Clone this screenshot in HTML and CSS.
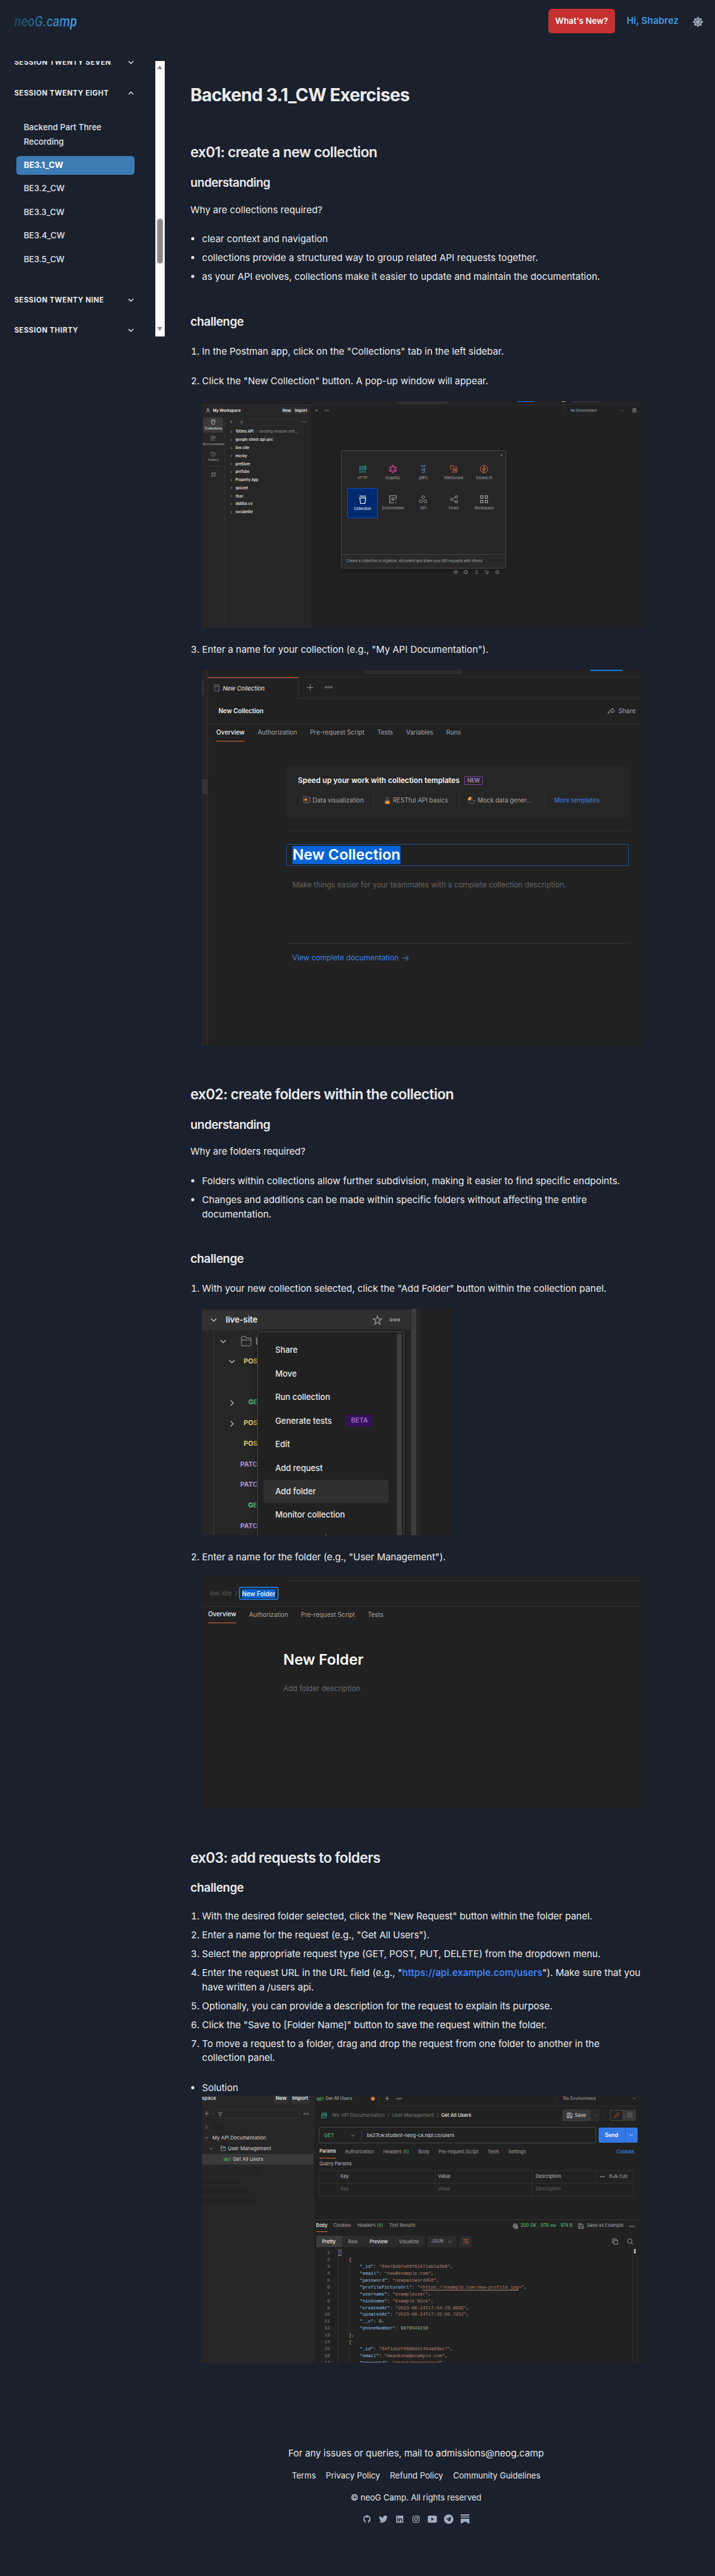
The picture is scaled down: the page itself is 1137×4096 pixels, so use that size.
FILE: index.html
```html
<!DOCTYPE html>
<html lang="en">
<head>
<meta charset="utf-8">
<title>Backend 3.1_CW Exercises | neoG.camp</title>
<link rel="stylesheet" href="styles.css">
</head>
<body>
<svg class="sprite" aria-hidden="true">
  <symbol id="down" viewBox="0 0 14 14"><path d="M2 4.5 7 9.5 12 4.5"/></symbol>
  <symbol id="up" viewBox="0 0 14 14"><path d="M2 9.5 7 4.5 12 9.5"/></symbol>
  <symbol id="right" viewBox="0 0 14 14"><path d="M4.5 2 9.5 7 4.5 12"/></symbol>
  <symbol id="plus" viewBox="0 0 14 14"><path d="M7 0V14M0 7H14"/></symbol>
  <symbol id="more" viewBox="0 0 20 8"><circle cx="3.5" cy="4" r="2"/><circle cx="10" cy="4" r="2"/><circle cx="16.500" cy="4" r="2"/></symbol>
  <symbol id="filter" viewBox="0 0 14 14"><path d="M1 2H13M3 6H11M4.500 9.500H9.500M6 13H8"/></symbol>
  <symbol id="bin" viewBox="0 0 16 16"><path d="M2 1H14M1.500 4.500H14.500M2.500 4.500 4 14.500H12L13.500 4.500"/></symbol>
  <symbol id="env" viewBox="0 0 16 16"><path d="M14 9V1.500H2V14.500H10M6 5.500H10V9.500H6ZM13.500 12.500V14.500"/></symbol>
  <symbol id="clock" viewBox="0 0 16 16"><path d="M2 5A6.500 6.500 0 1 1 1.500 9M1.500 2V5.500H5M8 4.500V8.500L10.500 10"/></symbol>
  <symbol id="grid" viewBox="0 0 16 16"><path d="M1.500 1.500H6V6H1.500ZM10 1.500H14.500V6H10ZM1.500 10H6V14.500H1.500ZM10 10H14.500V14.500H10Z"/></symbol>
  <symbol id="gridplus" viewBox="0 0 16 16"><path d="M1.500 1.500H6V6H1.500ZM10 1.500H14.500V6H10ZM1.500 10H6V14.500H1.500ZM12.200 9.500V15M9.500 12.200H15"/></symbol>
  <symbol id="http" viewBox="0 0 20 20"><path d="M2 3.500H18L15.500 1M18 16.500H2L4.500 19M2.500 6.500V13.500M5.500 6.500V13.500M2.500 10H5.500M7 6.500H11M9 6.500V13.500M11.500 6.500H14M12.700 6.500V13.500M15.500 13.500V6.500H18V10H15.500"/></symbol>
  <symbol id="graphql" viewBox="0 0 20 20"><path d="M10 2 17 6V14L10 18 3 14V6ZM10 2 3.500 14H16.500Z"/><circle cx="10" cy="2.200" r="1.200"/><circle cx="17" cy="6" r="1.200"/><circle cx="17" cy="14" r="1.200"/><circle cx="10" cy="17.800" r="1.200"/><circle cx="3" cy="14" r="1.200"/><circle cx="3" cy="6" r="1.200"/></symbol>
  <symbol id="grpc" viewBox="0 0 20 20"><path d="M5 3H15M7 1 5 3 7 5M13 1 15 3 13 5M13 8V16Q13 19 10 19 7.500 19 7 17.500"/><circle cx="10" cy="11" r="3"/></symbol>
  <symbol id="socket" viewBox="0 0 20 20"><path d="M2 2V8L8 13 12 13 12 8 7 2ZM7 7 11 11M5 17H12L17 17V6L12 2M14 15V9"/></symbol>
  <symbol id="bolt" viewBox="0 0 20 20"><circle cx="10" cy="10" r="8.500"/><path d="M11.500 4 6 11H9.500L8.500 16 14 9H10.500Z"/></symbol>
  <symbol id="api" viewBox="0 0 20 20"><path d="M10 1.500 13 3.200V6.800L10 8.500 7 6.800V3.200Z"/><circle cx="5" cy="14.500" r="3.500"/><circle cx="15" cy="14.500" r="3.500"/></symbol>
  <symbol id="flows" viewBox="0 0 20 20"><circle cx="4" cy="10" r="2.700"/><path d="M13.500 2H18V6.500H13.500ZM13.500 13.500H18V18H13.500ZM6.500 9 13.500 4.500M6.500 11 13.500 16"/></symbol>
  <symbol id="person" viewBox="0 0 16 16"><circle cx="8" cy="4.500" r="3"/><path d="M2.500 15V12L6 9H10L13.500 12V15"/></symbol>
  <symbol id="eye" viewBox="0 0 16 16"><path d="M8 14.500H2.500V1.500H13.500V8M5 5H11M5 8H9M8 2V14"/><circle cx="12" cy="12" r="2.500"/></symbol>
  <symbol id="share" viewBox="0 0 18 18"><path d="M1.500 16C2 10 6 7 11 7V3L17 9 11 14V11C7 11 4 12 1.500 16Z"/></symbol>
  <symbol id="star" viewBox="0 0 24 24"><path d="M12 2 14.700 9H22L16 13.500 18.300 21.500 12 16.800 5.700 21.500 8 13.500 2 9H9.300Z"/></symbol>
  <symbol id="folder" viewBox="0 0 24 24"><path d="M1.500 20V4Q1.500 1.500 4 1.500H9L12 5H20Q22.500 5 22.500 7.500V20Q22.500 22.500 20 22.500H4Q1.500 22.500 1.500 20ZM1.500 9.500H22.500"/></symbol>
  <symbol id="disk" viewBox="0 0 16 16"><path d="M1.500 1.500H11L14.500 5V14.500H1.500ZM4.500 14V9H11.500V14M5 2V5H9.500V2"/></symbol>
  <symbol id="pencil" viewBox="0 0 16 16"><path d="M2 14 3 10 11.500 1.500 14.500 4.500 6 13Z"/></symbol>
  <symbol id="note" viewBox="0 0 16 16"><path d="M2 1.500H14V12H9L6 14.500V12H2ZM4.500 5H11.500M4.500 8H11.500"/></symbol>
  <symbol id="globe" viewBox="0 0 16 16"><circle cx="7.500" cy="7.500" r="6"/><path d="M1.500 7.500H13.500M7.500 1.500Q3 7.500 7.500 13.500M7.500 1.500Q12 7.500 7.500 13.500M10 10H15V15H10Z"/></symbol>
  <symbol id="wrap" viewBox="0 0 16 16"><path d="M1 3H15M1 8H12Q15 8 15 10.500 15 13 12 13H9M11 11 9 13 11 15M1 13H5"/></symbol>
  <symbol id="copy" viewBox="0 0 16 16"><path d="M5 5H14.500V14.500H5ZM11 5V1.500H1.500V11H5"/></symbol>
  <symbol id="search" viewBox="0 0 16 16"><circle cx="7" cy="7" r="5.500"/><path d="M11 11 15 15"/></symbol>
</svg>

<header class="topbar">
  <a class="logo">neoG.camp</a>
  <a class="whats-new">What's New?</a>
  <a class="hello">Hi, Shabrez</a>
  <svg class="sun" viewBox="0 0 26 26"><path d="M13 .5 16.250 5.150 21.800 4.200 20.850 9.750 25.500 13 20.850 16.250 21.800 21.800 16.250 20.850 13 25.500 9.750 20.850 4.200 21.800 5.150 16.250 .5 13 5.150 9.750 4.200 4.200 9.750 5.150Z"/><circle class="sun-ring" cx="13" cy="13" r="5.600"/></svg>
</header>

<div class="columns">
  <nav class="sidebar">
    <div class="sessions">
      <div class="session">Session Twenty Seven<svg class="ic"><use href="#down"/></svg></div>
      <div class="session">Session Twenty Eight<svg class="ic"><use href="#up"/></svg></div>
      <ul class="lessons">
        <li>Backend Part Three Recording</li>
        <li class="current">BE3.1_CW</li>
        <li>BE3.2_CW</li>
        <li>BE3.3_CW</li>
        <li>BE3.4_CW</li>
        <li>BE3.5_CW</li>
      </ul>
      <div class="session">Session Twenty Nine<svg class="ic"><use href="#down"/></svg></div>
      <div class="session last">Session Thirty<svg class="ic"><use href="#down"/></svg></div>
    </div>
    <div class="scrollbar"><i class="tri-up"></i><i class="thumb"></i><i class="tri-down"></i></div>
  </nav>

  <main class="content">
    <h1>Backend 3.1_CW Exercises</h1>

    <h2 class="first">ex01: create a new collection</h2>
    <h3>understanding</h3>
    <p>Why are collections required?</p>
    <ul class="list">
      <li>clear context and navigation</li>
      <li>collections provide a structured way to group related API requests together.</li>
      <li>as your API evolves, collections make it easier to update and maintain the documentation.</li>
    </ul>
    <h3 class="later">challenge</h3>
    <ol class="list loose">
      <li>In the Postman app, click on the "Collections" tab in the left sidebar.</li>
      <li>Click the "New Collection" button. A pop-up window will appear.
        <div class="shot shot-a">
          <div class="a-strip"><i class="a-search"></i><i class="a-blue"></i><i class="a-face"></i><i class="a-up"></i></div>
          <div class="a-bar">
            <div class="a-ws"><svg class="ic"><use href="#person"/></svg><b>My Workspace</b><span class="btn">New</span><span class="btn">Import</span></div>
            <svg class="ic a-plus"><use href="#plus"/></svg><svg class="ic a-dots"><use href="#more"/></svg>
            <div class="a-noenv"><span>No Environment</span><svg class="ic"><use href="#down"/></svg><svg class="ic a-eye"><use href="#eye"/></svg></div>
          </div>
          <div class="a-body">
            <div class="a-nav">
              <div class="a-tab on"><svg class="ic"><use href="#bin"/></svg>Collections</div>
              <div class="a-tab"><svg class="ic"><use href="#env"/></svg>Environments</div>
              <div class="a-tab"><svg class="ic"><use href="#clock"/></svg>History</div>
              <hr>
              <svg class="ic a-more"><use href="#gridplus"/></svg>
            </div>
            <div class="a-list">
              <div class="a-filter"><svg class="ic a-p"><use href="#plus"/></svg><span class="a-box"><svg class="ic"><use href="#filter"/></svg></span><svg class="ic a-d"><use href="#more"/></svg></div>
              <div class="a-item"><svg class="ic"><use href="#right"/></svg>100ms API<span class="fork">⑂</span><span class="dim">docking-module-met...</span></div>
              <div class="a-item"><svg class="ic"><use href="#right"/></svg>google-sheet-api-poc</div>
              <div class="a-item"><svg class="ic"><use href="#right"/></svg>live-site</div>
              <div class="a-item"><svg class="ic"><use href="#right"/></svg>mocky</div>
              <div class="a-item"><svg class="ic"><use href="#right"/></svg>preStore</div>
              <div class="a-item"><svg class="ic"><use href="#right"/></svg>preTube</div>
              <div class="a-item"><svg class="ic"><use href="#right"/></svg>Property App</div>
              <div class="a-item"><svg class="ic"><use href="#right"/></svg>quizzel</div>
              <div class="a-item"><svg class="ic"><use href="#right"/></svg>rbac</div>
              <div class="a-item"><svg class="ic"><use href="#right"/></svg>skillful-cv</div>
              <div class="a-item"><svg class="ic"><use href="#right"/></svg>socialelite</div>
            </div>
            <div class="a-stage">
              <div class="modal">
                <div class="modal-x">×</div>
                <div class="tiles">
                  <div class="tile teal"><svg class="ic"><use href="#http"/></svg>HTTP</div>
                  <div class="tile pink"><svg class="ic"><use href="#graphql"/></svg>GraphQL</div>
                  <div class="tile blue"><svg class="ic"><use href="#grpc"/></svg>gRPC</div>
                  <div class="tile orange"><svg class="ic"><use href="#socket"/></svg>WebSocket</div>
                  <div class="tile orange"><svg class="ic"><use href="#bolt"/></svg>Socket.IO</div>
                  <div class="tile picked"><svg class="ic"><use href="#bin"/></svg>Collection<svg class="ic pin"><use href="#pencil"/></svg></div>
                  <div class="tile"><svg class="ic"><use href="#env"/></svg>Environment</div>
                  <div class="tile"><svg class="ic"><use href="#api"/></svg>API</div>
                  <div class="tile"><svg class="ic"><use href="#flows"/></svg>Flows</div>
                  <div class="tile"><svg class="ic"><use href="#grid"/></svg>Workspace</div>
                </div>
                <div class="modal-foot">Create a collection to organize, document and share your API requests with others.</div>
              </div>
              <div class="a-mini"><svg class="ic"><use href="#http"/></svg><svg class="ic"><use href="#graphql"/></svg><svg class="ic"><use href="#grpc"/></svg><svg class="ic"><use href="#socket"/></svg><svg class="ic"><use href="#bolt"/></svg></div>
            </div>
          </div>
        </div>
      </li>
      <li>Enter a name for your collection (e.g., "My API Documentation").
        <div class="shot shot-b">
          <div class="b-edge"><i></i><i></i></div>
          <div class="b-main">
            <div class="b-strip"><i class="b-search"></i><i class="b-blue"></i></div>
            <div class="b-tabs"><div class="b-tab"><svg class="ic"><use href="#bin"/></svg><em>New Collection</em></div><div class="b-rest"><svg class="ic b-plus"><use href="#plus"/></svg><svg class="ic b-dots"><use href="#more"/></svg></div></div>
            <div class="b-head"><b>New Collection</b><span><svg class="ic"><use href="#share"/></svg>Share</span></div>
            <div class="tabs b-nav"><span class="on">Overview</span><span>Authorization</span><span>Pre-request Script</span><span>Tests</span><span>Variables</span><span>Runs</span></div>
            <div class="b-page">
              <div class="b-card">
                <div class="b-title">Speed up your work with collection templates<span>NEW</span></div>
                <div class="b-links">
                  <span class="l1"><svg viewBox="0 0 18 18"><path class="g" d="M1 1H17V13H1ZM10 5H15M10 9H15M5 17 7 13M13 17 11 13"/><circle class="o" cx="6" cy="7" r="3"/></svg>Data visualization</span>
                  <span class="l2"><svg viewBox="0 0 18 18"><circle class="g" cx="9" cy="4" r="3"/><path class="g" d="M3 17V11Q9 6 15 11V17"/><path class="o" d="M4.500 10H13.500V17H4.500Z"/></svg>RESTful API basics</span>
                  <span class="l3"><svg viewBox="0 0 18 18"><path class="g" d="M16.500 9A7.500 7.500 0 1 1 9 1.500V9Z"/><path class="o" d="M7.500 0V8H0Q0 0 7.500 0Z"/></svg>Mock data gener...</span>
                  <a>More templates</a>
                </div>
              </div>
              <hr>
              <div class="b-input"><mark>New Collection</mark></div>
              <div class="b-desc">Make things easier for your teammates with a complete collection description.</div>
              <hr class="b-hr2">
              <a class="b-view">View complete documentation <svg viewBox="0 0 16 16"><path d="M1 8H15M9 2 15 8 9 14"/></svg></a>
            </div>
          </div>
        </div>
      </li>
    </ol>

    <h2>ex02: create folders within the collection</h2>
    <h3>understanding</h3>
    <p>Why are folders required?</p>
    <ul class="list">
      <li>Folders within collections allow further subdivision, making it easier to find specific endpoints.</li>
      <li>Changes and additions can be made within specific folders without affecting the entire documentation.</li>
    </ul>
    <h3 class="later">challenge</h3>
    <ol class="list loose">
      <li>With your new collection selected, click the "Add Folder" button within the collection panel.
        <div class="shot shot-c">
          <div class="c-left">
            <div class="c-head"><svg class="ic"><use href="#down"/></svg><b>live-site</b><svg class="ic c-star"><use href="#star"/></svg><svg class="ic c-more"><use href="#more"/></svg></div>
            <div class="c-tree">
              <div class="c-row top"><svg class="ic"><use href="#down"/></svg><svg class="ic c-folder"><use href="#folder"/></svg><span class="c-bar"></span></div>
              <div class="c-row"><svg class="ic"><use href="#down"/></svg><span class="post">POST</span></div>
              <div class="c-row"></div>
              <div class="c-row"><svg class="ic"><use href="#right"/></svg><span class="get">GET</span></div>
              <div class="c-row"><svg class="ic"><use href="#right"/></svg><span class="post">POST</span></div>
              <div class="c-row"><span class="post">POST</span></div>
              <div class="c-row"><span class="patch">PATCH</span></div>
              <div class="c-row"><span class="patch">PATCH</span></div>
              <div class="c-row"><span class="get">GET</span></div>
              <div class="c-row"><span class="patch">PATCH</span></div>
            </div>
          </div>
          <div class="c-scroll"></div>
          <div class="c-menu">
            <span>Share</span><span>Move</span><span>Run collection</span><span>Generate tests<em>BETA</em></span><span>Edit</span><span>Add request</span><span class="on">Add folder</span><span>Monitor collection</span><span>Mock collection</span>
            <i></i>
          </div>
        </div>
      </li>
      <li>Enter a name for the folder (e.g., "User Management").
        <div class="shot shot-d">
          <div class="d-strip"></div>
          <div class="d-crumb"><span>live-site</span><span class="slash">/</span><span class="d-field"><mark>New Folder</mark></span></div>
          <div class="tabs d-nav"><span class="on">Overview</span><span>Authorization</span><span>Pre-request Script</span><span>Tests</span></div>
          <div class="d-title">New Folder</div>
          <div class="d-desc">Add folder description</div>
        </div>
      </li>
    </ol>

    <h2>ex03: add requests to folders</h2>
    <h3>challenge</h3>
    <ol class="list steps">
      <li>With the desired folder selected, click the "New Request" button within the folder panel.</li>
      <li>Enter a name for the request (e.g., "Get All Users").</li>
      <li>Select the appropriate request type (GET, POST, PUT, DELETE) from the dropdown menu.</li>
      <li>Enter the request URL in the URL field (e.g., "<a>https://api.example.com/users</a>"). Make sure that you have written a /users api.</li>
      <li>Optionally, you can provide a description for the request to explain its purpose.</li>
      <li>Click the "Save to [Folder Name]" button to save the request within the folder.</li>
      <li>To move a request to a folder, drag and drop the request from one folder to another in the collection panel.</li>
    </ol>
    <ul class="list solution">
      <li>Solution
        <div class="shot shot-e">
          <div class="e-side">
            <div class="e-ws"><b>space</b><span class="btn">New</span><span class="btn">Import</span></div>
            <div class="e-filter"><svg class="ic e-p"><use href="#plus"/></svg><span><svg class="ic"><use href="#filter"/></svg></span><svg class="ic e-d"><use href="#more"/></svg></div>
            <div class="e-node n0"><svg class="ic"><use href="#right"/></svg><i></i></div>
            <div class="e-node n1"><svg class="ic"><use href="#down"/></svg>My API Documentation</div>
            <div class="e-node n2"><svg class="ic"><use href="#down"/></svg><svg class="ic fold"><use href="#folder"/></svg>User Management</div>
            <div class="e-node n3"><em>GET</em>Get All Users</div>
            <div class="e-smudge" style="width:141px"></div><div class="e-smudge" style="width:90px"></div><div class="e-smudge" style="width:112px"></div><div class="e-smudge" style="width:121px"></div>
          </div>
          <div class="e-main">
            <div class="e-top"><div class="e-tab"><em>GET</em>Get All Users<i></i></div><div class="e-rest"><svg class="ic e-p"><use href="#plus"/></svg><svg class="ic e-d"><use href="#more"/></svg><span class="e-env">No Environment<svg class="ic"><use href="#down"/></svg></span></div></div>
            <div class="e-crumb"><svg class="ic e-http"><use href="#http"/></svg><span>My API Documentation&nbsp; /&nbsp; User Management&nbsp; /&nbsp; <b>Get All Users</b></span>
              <span class="e-save"><svg class="ic"><use href="#disk"/></svg>Save</span><span class="e-savev"><svg class="ic"><use href="#down"/></svg></span><span class="e-tog"><i><svg class="ic"><use href="#pencil"/></svg></i><i><svg class="ic"><use href="#note"/></svg></i></span></div>
            <div class="e-url"><div class="e-field"><b>GET</b><svg class="ic"><use href="#down"/></svg><span>be27cw.student-neog-ca.repl.co/users</span></div><div class="e-send"><b>Send</b><span><svg class="ic"><use href="#down"/></svg></span></div></div>
            <div class="tabs e-nav"><span class="on">Params</span><span>Authorization</span><span>Headers <em>(6)</em></span><span>Body</span><span>Pre-request Script</span><span>Tests</span><span>Settings</span><a>Cookies</a></div>
            <div class="e-q">Query Params</div>
            <div class="e-table">
              <span></span><span>Key</span><span>Value</span><span class="nb">Description</span><span class="bulk"><b>•••</b> Bulk Edit</span>
              <span></span><span class="ph">Key</span><span class="ph">Value</span><span class="ph wide">Description</span>
            </div>
            <div class="e-resp">
              <div class="tabs e-rnav"><span class="on">Body</span><span>Cookies</span><span>Headers <em>(8)</em></span><span>Test Results</span>
                <div class="e-status"><svg class="ic"><use href="#globe"/></svg><em>200 OK</em><em>879 ms</em><em>974 B</em><svg class="ic s2"><use href="#disk"/></svg>Save as Example<svg class="ic s3"><use href="#more"/></svg></div></div>
              <div class="e-tools"><div class="e-seg"><span class="on">Pretty</span><span>Raw</span><span class="br">Preview</span><span>Visualize</span></div><div class="e-json">JSON<svg class="ic"><use href="#down"/></svg></div><div class="e-wrap"><svg class="ic"><use href="#wrap"/></svg></div><svg class="ic e-copy"><use href="#copy"/></svg><svg class="ic e-find"><use href="#search"/></svg></div>
              <div class="e-codebox">
<div class="e-nums">1
2
3
4
5
6
7
8
9
10
11
12
13
14
15
16
17</div>
<pre class="e-code"><span class="cur">[</span>
    {
        <b>"_id"</b>: <u>"64e78d97e66f62471ab1a3b8"</u>,
        <b>"email"</b>: <u>"new@example.com"</u>,
        <b>"password"</b>: <u>"newpassword456"</u>,
        <b>"profilePictureUrl"</b>: <u>"&lt;<span class="ul">https://example.com/new-profile.jpg</span>&gt;"</u>,
        <b>"username"</b>: <u>"exampleuser"</u>,
        <b>"nickname"</b>: <u>"Example Nick"</u>,
        <b>"createdAt"</b>: <u>"2023-08-24T17:04:23.969Z"</u>,
        <b>"updatedAt"</b>: <u>"2023-08-24T17:25:08.735Z"</u>,
        <b>"__v"</b>: <s>0</s>,
        <b>"phoneNumber"</b>: <s>9876543210</s>
    },
    {
        <b>"_id"</b>: <u>"64f1dd2f0866dd1454a69bc7"</u>,
        <b>"email"</b>: <u>"akanksha@example.com"</u>,
        <b>"password"</b>: <u>"akankshapassword"</u></pre>
                <div class="e-rail"><i></i></div>
              </div>
            </div>
          </div>
        </div>
      </li>
    </ul>

    <footer class="foot">
      <div class="mail">For any issues or queries, mail to admissions@neog.camp</div>
      <div class="links"><a>Terms</a><a>Privacy Policy</a><a>Refund Policy</a><a>Community Guidelines</a></div>
      <div class="copyr">© neoG Camp. All rights reserved</div>
      <div class="social">
        <svg viewBox="0 0 24 24"><path d="M12 2.500C6.500 2.500 3 6.500 3 12c0 4.500 2.500 8 6 9.500V18c-2 .5-3-.5-3.500-2 2 1 3.500.5 3.500-.5C6.500 15 5.500 13 6 10.500L6.500 9 6.300 6.500 9 7.500h6L17.700 6.500 17.500 9l.5 1.500c.5 2.500-.5 4.500-3 5V21.500c3.500-1.500 6-5 6-9.500 0-5.500-3.500-9.500-9-9.500Z"/></svg>
        <svg viewBox="0 0 24 24"><path d="M23 5c-.8.400-1.700.600-2.600.700.900-.6 1.600-1.500 2-2.500-.9.500-1.900.900-2.900 1.100A4.600 4.600 0 0 0 11.700 8.500C7.900 8.300 4.600 6.500 2.300 3.700a4.600 4.600 0 0 0 1.400 6.100c-.7 0-1.400-.2-2-.6 0 2.300 1.500 4.200 3.600 4.600-.7.200-1.400.2-2 .1.600 1.800 2.300 3.100 4.200 3.200A9.200 9.200 0 0 1 1 19c2 1.300 4.400 2 7 2 8.500 0 13.300-7.200 12.900-13.700.8-.6 1.600-1.400 2.100-2.300Z"/></svg>
        <svg viewBox="0 0 24 24"><path fill-rule="evenodd" d="M3.500 3H20.500Q21 3 21 3.500V20.500Q21 21 20.500 21H3.500Q3 21 3 20.500V3.500Q3 3 3.500 3ZM5.700 9.800V18.400H8.300V9.800ZM7 5.500A1.500 1.500 0 1 0 7 8.500 1.500 1.500 0 1 0 7 5.500ZM10 9.800V18.400H12.700V14Q12.800 12 14.300 12T15.700 14V18.400H18.400V13.500Q18.300 9.600 15.200 9.600 13.500 9.600 12.600 11V9.800Z"/></svg>
        <svg viewBox="0 0 24 24" class="line"><rect x="4" y="4" width="16" height="16" rx="4.500"/><circle cx="12" cy="12" r="3.800"/><circle cx="16.800" cy="7.200" r=".5"/></svg>
        <svg viewBox="0 0 24 24"><path fill-rule="evenodd" d="M4 3H20Q23.500 3 23.500 6.500V17.500Q23.500 21 20 21H4Q.5 21 .5 17.500V6.500Q.5 3 4 3ZM9.500 8V16L16 12Z"/></svg>
        <svg viewBox="0 0 24 24"><path fill-rule="evenodd" d="M12 0A12 12 0 1 0 12 24 12 12 0 1 0 12 0ZM18 6.500 15.800 17.500Q15.500 18.300 14.800 18L11.500 15.500 9.800 17 10 13.800 15.500 8.800 8.800 13 5.500 12Q4.800 11.600 5.700 11.200Z"/></svg>
        <svg viewBox="0 0 24 24"><path d="M1 0H23V3H1ZM1 5.500H23V8.500H1ZM1 11H23V24L12 18 1 24Z"/></svg>
      </div>
    </footer>
  </main>
</div>
</body>
</html>
```
FILE: styles.css
```css
/* The layout is drawn on a 1655px wide canvas. */
html { background: #1a202c; overflow: hidden; }
body {
  zoom: 0.6867;
  margin: 0;
  width: 1655px;
  height: 5960px;
  overflow: hidden;
  background: #1a202c;
  color: #ececee;
  font-family: Inter, "Liberation Sans", sans-serif;
  font-size: 21.8px;
  line-height: 32.8px;
}
*, *::before, *::after { box-sizing: border-box; }
.sprite { display: block; width: 0; height: 0; }
.ic { flex: none; display: block; fill: none; stroke: currentColor; stroke-width: 1.4; }
i, em { font-style: normal; }

/* header */
.topbar { display: flex; align-items: center; height: 98px; padding-right: 25px; }
.logo {
  margin: 0 auto 0 30px; width: 180px; padding: 2px 3px;
  font: italic 600 34px/44px Roboto, sans-serif;
  transform: scaleX(.86); transform-origin: 0 50%;
  background: linear-gradient(90deg, #1c4354, #4299e1 92%);
  -webkit-background-clip: text; background-clip: text; color: transparent;
}
.whats-new { width: 154px; height: 56px; margin-right: 27px; border-radius: 8px; background: #c53030; color: #fff; font-size: 19.1px; font-weight: 600; line-height: 56px; text-align: center; }
.hello { width: 122px; margin-right: 31px; color: #4299e1; font-weight: 600; white-space: nowrap; }
.sun { width: 26px; height: 26px; margin-top: 3px; fill: #a0aec0; }
.sun-ring { fill: #a0aec0; stroke: #1a202c; stroke-width: 1.200; }

.columns { display: flex; }

/* sidebar */
.sidebar { display: flex; width: 381px; height: 638px; margin-top: 43px; flex: none; }
.sessions { width: 360px; height: 638px; padding: 0 50px 0 33px; overflow: hidden; }
.session { display: flex; justify-content: space-between; align-items: center; height: 32px; margin-bottom: 39px; font-size: 16.400px; font-weight: 700; letter-spacing: .8px; text-transform: uppercase; color: #e8eaee; }
.session:first-child { margin-top: -12px; }
.session.last { height: 28px; margin-bottom: 0; }
.session .ic { width: 15px; height: 15px; stroke-width: 2; }
.lessons { list-style: none; margin: 42px 0 57px 5px; padding: 0; font-size: 19.100px; font-weight: 500; color: #e4e7ec; }
.lessons li { width: 273px; height: 43.500px; margin-bottom: 11px; padding: 4.500px 17px; border-radius: 8px; }
.lessons li:first-child { height: 76px; width: 230px; padding-right: 0; margin-bottom: 11px; }
.lessons .current { background: #3c7ab3; color: #fff; font-weight: 700; }
.scrollbar { display: flex; flex-direction: column; align-items: center; width: 21px; background: #fcfcfc; }
.tri-up { margin-top: 11px; border: 6px solid transparent; border-top: 0; border-bottom: 10px solid #8b8b8b; }
.thumb { width: 12px; height: 103px; margin-top: 346px; border-radius: 6px; background: #8b8b8b; }
.tri-down { margin-top: 148px; border: 6px solid transparent; border-bottom: 0; border-top: 10px solid #8b8b8b; }

/* article */
.content { width: 1045px; margin-left: 60px; padding-top: 99.300px; }
h1, h2, h3, p { margin: 0; }
h1 { font-size: 41px; line-height: 48px; font-weight: 700; letter-spacing: -1px; }
h2 { margin-top: 92.800px; font-size: 32.700px; line-height: 42px; font-weight: 600; letter-spacing: -.8px; }
h2.first { margin-top: 87.400px; }
h3 { margin-top: 31.700px; font-size: 27.300px; line-height: 36px; font-weight: 600; letter-spacing: -.6px; }
h3.later { margin-top: 70px; }
p { margin-top: 27.300px; }
.list { margin: 35.400px 0 0; padding-left: 27px; }
.list > li + li { margin-top: 10.800px; }
.loose { margin-top: 34px; }
.loose > li + li { margin-top: 35.500px; }
.steps { margin-top: 31.200px; }
.solution { margin-top: 37.600px; }
.list a { color: #3f83f8; font-weight: 600; }

/* product pictures */
.shot { width: 1018px; overflow: hidden; background: #212121; color: #a6a6a6; line-height: 1.2; white-space: nowrap; }
.shot hr { margin: 0; border: 0; border-top: 1px solid #2e2e2e; }
.loose .shot { margin-top: 29px; }
.btn { display: flex; align-items: center; justify-content: center; background: #303030; border-radius: 3px; color: #e6e6e6; font-weight: 600; }
.tabs { display: flex; align-items: stretch; }
.tabs span { display: flex; align-items: center; }
.tabs .on { color: #f0f0f0; font-weight: 500; border-bottom: 2.500px solid #e2683c; }

/* a: workspace with the "create new" dialog */
.shot-a { height: 524px; font-size: 8.400px; }
.loose .shot-a { margin-top: 30px; }
.a-strip { display: flex; align-items: flex-start; height: 9px; border-bottom: 1.500px solid #2d2d2d; }
.a-search { width: 120px; height: 6px; margin-left: 449px; background: #2f2f2f; border-radius: 0 0 3px 3px; }
.a-blue { width: 41px; height: 1.500px; margin-left: 160px; background: #1a6fd0; }
.a-face { width: 9px; height: 1.500px; margin-left: 63px; background: #d8a878; }
.a-up { width: 66px; height: 4px; margin-left: 15px; background: #2f2f2f; }
.a-bar { display: flex; align-items: center; height: 26px; }
.a-ws { display: flex; align-items: center; width: 253px; height: 26px; padding: 0 7px 0 8px; background: #262626; color: #eee; font-size: 8.900px; }
.a-ws b { margin: 0 auto 0 6px; font-weight: 600; }
.a-ws .ic { width: 11px; height: 11px; }
.a-ws .btn { width: 26px; height: 16px; }
.a-ws .btn + .btn { width: 34px; margin-left: 3px; }
.a-plus { width: 8px; height: 8px; margin-left: 8px; }
.a-dots { width: 11px; height: 5px; margin-left: 15px; }
.a-noenv { display: flex; align-items: center; width: 179px; height: 26px; margin-left: auto; padding: 0 11px 0 13px; border-left: 1px solid #2d2d2d; font-size: 8px; }
.a-noenv span { margin-right: auto; }
.a-noenv .ic { width: 8px; height: 8px; margin-right: 18px; }
.a-noenv .a-eye { width: 11px; height: 11px; margin: 0; }
.a-body { display: flex; height: 489px; }
.a-nav { width: 54px; padding: 3px 3px; background: #262626; border-right: 1px solid #303030; font-size: 7.600px; }
.a-tab { display: flex; flex-direction: column; align-items: center; height: 35px; margin-bottom: 2px; padding-top: 5px; gap: 3px; border-radius: 3px; }
.a-tab .ic { width: 12px; height: 12px; stroke-width: 1.200; }
.a-tab.on { background: #3a3a3a; color: #eee; }
.a-nav hr { margin: 3px 6px 13px; border-color: #383838; }
.a-more { width: 11px; height: 11px; margin: 0 auto; }
.a-list { width: 199px; background: #262626; color: #e2e2e2; font-size: 8.200px; font-weight: 600; }
.a-filter { display: flex; align-items: center; height: 27px; padding: 5px 10px 5px 9px; color: #9a9a9a; }
.a-p { width: 8px; height: 8px; margin-right: 7px; }
.a-box { width: 150px; height: 16px; padding: 3px 8px; border: 1px solid #303030; border-radius: 3px; }
.a-box .ic { width: 9px; height: 9px; }
.a-d { width: 10px; height: 5px; margin-left: auto; }
.a-item { display: flex; align-items: center; height: 18.600px; padding-left: 9px; }
.a-item .ic { width: 8px; height: 8px; margin-right: 6.500px; }
.a-item .dim { font-weight: 400; color: #989898; }
.fork { margin: 0 4px 0 5px; font-weight: 400; color: #777; }
.a-stage { width: 765px; padding: 78.500px 0 0 68px; }
.modal { width: 384px; height: 274px; border: 1.500px solid #474747; border-radius: 5px; background: #262626; overflow: hidden; box-shadow: 0 3px 14px #1a1a1a; }
.modal-x { height: 16px; padding: 5px 7px 0; text-align: right; font-size: 11px; line-height: 12px; color: #888; }
.tiles { display: grid; grid-template-columns: repeat(5, 70.400px); grid-auto-rows: 70px; height: 223px; padding-left: 14px; }
.tile { position: relative; display: flex; flex-direction: column; align-items: center; gap: 6px; padding-top: 16px; }
.tile .ic { width: 20px; height: 20px; stroke-width: 1.300; }
.teal .ic { color: #2bb3a4; } .pink .ic { color: #e546a4; } .blue .ic { color: #5b9bdc; } .orange .ic { color: #e8734a; }
.picked { background: #002a70; border: 1px solid #0b50b0; border-radius: 3px; color: #fff; }
.tile .pin { position: absolute; top: 6px; right: 6px; width: 8px; height: 8px; color: #0d6be0; }
.modal-foot { display: flex; align-items: center; height: 33px; padding-left: 12px; background: #292929; border-top: 1px solid #404040; font-size: 8.100px; }
.a-mini { display: flex; gap: 13px; margin: 3px 0 0 261px; color: #8c8c8c; }
.a-mini .ic { width: 11px; height: 11px; }

/* b: new collection page */
.shot-b { display: flex; height: 871px; font-size: 14.500px; }
.b-edge { width: 14px; background: #252525; border-right: 1px solid #2e2e2e; padding-top: 27px; }
.b-edge i { display: block; height: 30px; width: 4px; background: #323232; }
.b-edge i + i { width: 13px; height: 34px; margin-top: 197px; background: #363636; }
.b-main { width: 1004px; }
.b-strip { display: flex; align-items: flex-start; height: 18px; border-bottom: 2px solid #2d2d2d; }
.b-search { width: 224px; height: 9px; margin-left: 363px; border: 1px solid #3a3a3a; border-top: 0; border-radius: 0 0 4px 4px; background: #2a2a2a; }
.b-blue { width: 76px; height: 3px; margin-left: 297px; border-radius: 0 0 3px 3px; background: #1a78e0; }
.b-tabs { display: flex; height: 49px; }
.b-tab { display: flex; align-items: center; width: 210px; padding-left: 11px; border-top: 2.500px solid #e2683c; border-right: 1px solid #2f2f2f; color: #eee; }
.b-tab .ic { width: 17px; height: 18px; margin-right: 6px; stroke-width: 1; color: #999; }
.b-tab em { font-style: italic; font-size: 13.600px; }
.b-rest { display: flex; align-items: center; flex: 1; border-bottom: 1px solid #2f2f2f; }
.b-plus { width: 15px; height: 15px; margin-left: 18px; stroke-width: 1.200; }
.b-dots { width: 19px; height: 8px; margin-left: 26px; stroke-width: 1.300; }
.b-head { display: flex; align-items: center; justify-content: space-between; height: 60px; padding: 0 14px 0 24px; border-bottom: 1px solid #2f2f2f; }
.b-head b { color: #f0f0f0; font-weight: 600; font-size: 14.300px; }
.b-head span { display: flex; align-items: center; gap: 8px; }
.b-head .ic { width: 18px; height: 18px; }
.b-nav { height: 39px; gap: 30px; padding-left: 19px; }
.b-page { width: 795px; margin: 59px 0 0 180px; }
.b-card { height: 117px; padding: 21px 28px 0; background: #262626; border-radius: 3px; }
.b-title { display: flex; align-items: center; color: #f4f4f4; font-size: 17.050px; font-weight: 600; height: 22px; }
.b-title span { margin-left: 11px; padding: 0 5px; height: 21px; border: 1px solid #7545a8; border-radius: 3px; color: #b795df; font-size: 12.500px; font-weight: 500; line-height: 19px; }
.b-links { display: flex; margin-top: 15px; height: 42px; font-size: 14.300px; }
.b-links span, .b-links a { display: flex; align-items: center; }
.b-links span { border-right: 1px solid #333; }
.b-links svg { width: 18px; height: 20px; margin-right: 4px; }
.g { fill: none; stroke: #777; stroke-width: 1.200; } .o { fill: #f59a2c; }
.l1 { width: 177px; padding-left: 12px; } .l2 { width: 198px; padding-left: 21px; } .l3 { width: 198px; padding-left: 19px; }
.shot .b-links a { margin-left: 21px; color: #3c83e8; font-weight: 400; }
.b-page hr { margin-top: 31px; }
.b-input { height: 51px; margin-top: 29px; padding: 4px 0 0 14px; border: 1.500px solid #1b5797; border-radius: 4px; }
mark { background: #0864d6; color: #fff; }
.b-input mark { display: inline-block; height: 42px; font-size: 34.200px; line-height: 42px; font-weight: 600; }
.b-desc { margin: 34px 0 0 15.500px; color: #646464; font-size: 17.200px; line-height: 22px; }
.b-page .b-hr2 { margin-top: 124px; }
.shot .b-view { display: flex; align-items: center; margin: 22px 0 0 15px; color: #3c83e8; font-size: 17.200px; font-weight: 400; line-height: 22px; }
.b-view svg { width: 16px; height: 16px; margin-left: 7px; fill: none; stroke: #3c83e8; stroke-width: 1.500; }

/* c: collection context menu */
.shot-c { position: relative; display: flex; width: 577px; height: 524px; font-size: 18.800px; }
.c-left { width: 485px; padding-top: 3px; background: #262626; }
.c-head { display: flex; align-items: center; width: 481px; height: 47px; padding-left: 19px; background: #303030; color: #cfcfcf; }
.c-head b { margin: 0 auto 0 19px; color: #ececec; font-weight: 600; }
.c-head .ic, .c-row .ic { width: 17px; height: 17px; }
.c-head .c-star { width: 24px; height: 24px; stroke-width: 1.800; color: #999; }
.c-head .c-more { width: 26px; height: 11px; margin: 0 21px 0 16px; color: #a8a8a8; }
.c-tree { width: 128px; height: 474px; margin-left: 26px; border-left: 1px solid #3a3a3a; }
.c-row { display: flex; align-items: center; height: 47.700px; width: 101px; overflow: hidden; padding-left: 33px; color: #cfcfcf; font-size: 15.500px; font-weight: 700; }
.c-row.top { margin-top: 1.500px; padding-left: 13px; }
.c-row .c-folder { width: 25px; height: 25px; margin-left: 33px; color: #999; }
.c-bar { width: 3px; height: 15px; margin-left: 9px; background: #bbb; flex: none; }
.post { margin-left: 19px; color: #e0c96c; } .get { margin-left: 30px; color: #5fc08c; } .patch { margin-left: 28px; color: #b298d6; }
.c-row .post:first-child { margin-left: 36px; } .c-row .get:first-child { margin-left: 46px; }
.c-scroll { width: 18px; border-left: 12px solid #3d3d3d; background: #242424; border-right: 1px solid #333; }
.c-menu { position: absolute; left: 127px; top: 52px; width: 341px; height: 500px; padding: 16px 0 0 14px; border: 2px solid #4a4a4a; border-radius: 5px 5px 0 0; background: #212121; color: #e8e8e8; box-shadow: 0 0 14px #1a1a1a; }
.c-menu span { display: flex; align-items: center; width: 290px; height: 54.500px; padding-left: 27px; border-radius: 6px; font-weight: 500; }
.c-menu .on { background: #303030; }
.c-menu em { margin-left: 34px; width: 60px; height: 28px; border-radius: 4px; background: #35105c; color: #a97cd8; font-size: 15.500px; line-height: 27px; text-align: center; }
.c-menu i { position: absolute; right: 4px; top: 4px; width: 12px; height: 500px; border-radius: 6px; background: #3d3d3d; }

/* d: new folder page */
.shot-d { height: 536.500px; font-size: 14.400px; }
.d-strip { height: 9px; margin-left: 201px; border-left: 1px solid #2f2f2f; border-bottom: 1.500px solid #2f2f2f; }
.d-crumb { display: flex; align-items: center; height: 60px; padding-left: 18px; border-bottom: 1.500px solid #2e2e2e; color: #5e5e5e; font-size: 13.500px; }
.d-crumb .slash { margin-left: 9px; width: 8px; }
.d-field { display: flex; align-items: center; width: 92px; height: 30px; padding: 0 4px; border: 3px solid #1a74d6; border-radius: 5px; }
.d-field mark { width: 78px; height: 21px; line-height: 21px; font-size: 14.300px; font-weight: 500; }
.d-nav { height: 38px; gap: 29.500px; padding-left: 14px; }
.d-title { margin: 64px 0 0 188px; color: #fff; font-size: 34px; font-weight: 600; line-height: 42px; }
.d-desc { margin: 36px 0 0 188px; color: #6a6a6a; font-size: 17px; line-height: 22px; }

/* e: finished request */
.shot-e { display: flex; height: 619px; font-size: 11.500px; }
.shot-e em { color: #5cb270; }
.e-side { width: 258px; background: #262626; border-right: 1px solid #2e2e2e; color: #d4d4d4; }
.e-ws { display: flex; align-items: center; height: 24px; padding: 0 7px 9px 0; overflow: hidden; }
.e-ws b { margin: 0 auto 0 -1px; font-weight: 600; }
.e-ws .btn { width: 35px; height: 24px; }
.e-ws .btn + .btn { width: 45px; margin-left: 4px; }
.e-filter { display: flex; align-items: center; height: 37px; padding-left: 5px; color: #9c9c9c; }
.e-filter span { width: 201px; height: 21px; margin-left: 9px; padding: 4px 10px; border: 1px solid #323232; border-radius: 3px; }
.e-filter span .ic { width: 12px; height: 12px; }
.e-p { width: 11px; height: 11px; stroke-width: 1.600; }
.e-d { width: 14px; height: 6px; }
.e-filter .e-d { margin-left: 8px; }
.e-node { display: flex; align-items: center; height: 24.900px; padding-left: 5px; }
.e-node .ic { width: 10px; height: 10px; margin-right: 9px; }
.n0 i { width: 30px; height: 16px; border-radius: 8px; background: #232323; }
.n2 { padding-left: 15px; } .n2 .ic { margin-right: 18px; } .n2 .fold { width: 12px; height: 12px; margin-right: 5px; stroke-width: 2; }
.n3 { height: 24.500px; padding-left: 50px; background: #3a3a3a; } .n3 em, .e-tab em { margin-right: 4px; font-size: 8.500px; font-weight: 700; }
.e-smudge { height: 14px; margin-top: 9px; border-radius: 0 7px 7px 0; background: #232323; }
.e-main { width: 760px; padding-right: 4px; }
.e-top { display: flex; height: 24.500px; }
.e-tab { display: flex; align-items: center; width: 152px; padding: 0 9px 9px 7px; border-right: 1px solid #2e2e2e; color: #bdbdbd; font-size: 10px; }
.e-tab i { width: 8px; height: 8px; margin-left: auto; border-radius: 4px; background: #e57442; }
.e-rest { display: flex; align-items: center; flex: 1; padding: 0 0 9px 13px; border-bottom: 1px solid #2e2e2e; }
.e-rest .e-d { margin-left: 15px; }
.e-env { display: flex; align-items: center; justify-content: space-between; width: 196px; height: 15px; margin-left: auto; padding: 0 9px 0 17px; border-left: 1px solid #2e2e2e; font-size: 10px; }
.e-env .ic, .e-savev .ic, .e-field .ic, .e-json .ic { width: 10px; height: 10px; }
.e-crumb { display: flex; align-items: center; height: 43px; padding: 0 9px 0 17px; color: #777; font-size: 11.200px; }
.e-crumb > span:nth-child(2) { margin: 0 auto 0 11px; }
.e-crumb b { color: #e4e4e4; font-weight: 500; }
.e-http { width: 16px; height: 16px; color: #2bb3a4; }
.e-save { display: flex; align-items: center; justify-content: center; gap: 5px; width: 65px; height: 28px; border-radius: 3px 0 0 3px; background: #383838; color: #ddd; }
.e-save .ic { width: 14px; height: 14px; }
.e-savev { display: flex; align-items: center; justify-content: center; width: 22px; height: 28px; margin-right: 11px; background: #2a2a2a; border-radius: 0 3px 3px 0; }
.e-tog { display: flex; width: 73px; height: 28px; padding: 1px 0 1px 11px; border-left: 1px solid #2d2d2d; }
.e-tog i { display: flex; align-items: center; justify-content: center; width: 31px; background: #3a3a3a; }
.e-tog i:first-child { background: #242424; border: 1px solid #444; color: #e2683c; }
.e-tog .ic { width: 13px; height: 13px; }
.e-url { display: flex; padding: 6px 0 0 13px; height: 44px; }
.e-field { display: flex; align-items: center; width: 641px; height: 38px; padding-left: 10px; border: 1.500px solid #454545; border-radius: 3px; color: #ddd; }
.e-field b { width: 62px; color: #5cb270; font-weight: 500; }
.e-field .ic { margin-right: 15px; }
.e-field span { display: flex; align-items: center; height: 22px; padding-left: 11px; border-left: 1px solid #383838; font-size: 11px; }
.e-send { display: flex; align-items: center; width: 89px; height: 36px; margin: .5px 0 0 7px; border-radius: 3px; background: #3478e6; color: #fff; font-size: 12.300px; }
.e-send b { width: 60px; padding-left: 14px; font-weight: 600; }
.e-send span { display: flex; align-items: center; justify-content: center; flex: 1; height: 36px; border-left: 1px solid #2a64c4; }
.e-send .ic { width: 11px; height: 11px; }
.e-nav { height: 28px; margin-top: 6px; padding: 0 13px 0 14px; gap: 21px; font-size: 10.700px; }
.tabs em { margin-left: 3px; }
.shot .e-nav a { margin-left: auto; align-self: center; color: #4088ee; font-weight: 500; }
.e-q { margin: 6px 0 0 14px; height: 22px; line-height: 16px; font-size: 11px; font-weight: 500; }
.e-table { display: grid; grid-template-columns: 41px 226px 226px 147px 88px; grid-template-rows: 29px 29px; width: 729px; margin-left: 13px; border: 1px solid #303030; border-width: 1px 0 0 1px; font-size: 10.800px; font-weight: 500; }
.e-table span { display: flex; align-items: center; padding-left: 7px; border: 1px solid #303030; border-width: 0 1px 1px 0; }
.e-table .nb { border-right-color: #303030; }
.e-table .ph { color: #666; font-weight: 400; }
.e-table .wide { grid-column: span 2; }
.e-table .bulk { gap: 10px; padding-left: 9px; font-weight: 400; font-size: 10.400px; }
.bulk b { font-size: 8px; }
.e-resp { margin-top: 54px; border-top: 1px solid #333; height: 332px; }
.e-rnav { height: 28.500px; gap: 14px; padding: 0 12px 0 6px; font-size: 10.700px; }
.e-status { display: flex; align-items: center; margin-left: auto; }
.e-status .ic { width: 14px; height: 14px; margin-right: 5px; }
.e-status em { margin: 0 10px 0 0; font-weight: 500; font-size: 10.200px; }
.e-status .s2 { margin: 0 6px 0 3px; } .e-status .s3 { height: 6px; margin: 0 0 0 12px; }
.e-tools { display: flex; align-items: center; height: 43px; padding-left: 6px; font-size: 11px; }
.e-seg { display: flex; width: 251px; height: 26px; background: #2b2b2b; border-radius: 3px; }
.e-seg span { display: flex; align-items: center; padding-left: 14px; width: 60px; }
.e-seg span:nth-child(2) { width: 50px; } .e-seg span:nth-child(3) { width: 68px; } .e-seg span:nth-child(4) { width: 73px; }
.e-seg .on { background: #3b3b3b; color: #f0f0f0; font-weight: 500; } .e-seg .br { color: #e4e4e4; font-weight: 500; }
.e-json { display: flex; align-items: center; justify-content: space-between; width: 67px; height: 27px; margin-left: 7px; padding: 0 10px 0 9px; background: #2b2b2b; font-size: 10.200px; }
.e-wrap { display: flex; align-items: center; justify-content: center; width: 29px; height: 27px; margin-left: 7px; background: #2b2b2b; color: #d9714a; }
.e-wrap .ic { width: 14px; height: 14px; }
.e-copy { width: 15px; height: 15px; margin-left: auto; } .e-find { width: 15px; height: 15px; margin: 0 15px 0 20px; }
.e-codebox { display: flex; height: 261px; font: 10.580px/15.960px "Liberation Mono", monospace; }
.e-nums { width: 38px; margin-top: -3px; white-space: pre-line; text-align: right; color: #858585; }
.e-code { margin: -3px 0 0 18.500px; width: 682px; height: 264px; overflow: hidden; font: inherit; color: #bbb;
  background: linear-gradient(#444, #444) 0 20px / 1px 260px no-repeat, linear-gradient(#3d3d3d, #3d3d3d) 26px 35px / 1px 160px no-repeat, linear-gradient(#3d3d3d, #3d3d3d) 26px 226px / 1px 60px no-repeat; }
.cur { outline: 1px solid #777; }
.e-code b { font-weight: 400; color: #8fc4e4; } .e-code u { text-decoration: none; color: #b98069; } .e-code s { text-decoration: none; color: #a9bd9b; }
.e-code .ul { border-bottom: 1px solid #b98069; }
.e-rail { width: 18px; border-left: 1px solid #2e2e2e; }
.e-rail i { display: block; width: 4px; height: 10px; margin: -4px 0 0 3px; background: #aaa; }

/* footer */
.foot { display: flex; flex-direction: column; align-items: center; margin-top: 193px; color: #e6e8ec; }
.mail { font-size: 21.600px; }
.links { display: flex; gap: 23px; margin-top: 22.300px; font-size: 19px; line-height: 28px; }
.copyr { margin-top: 22.300px; font-size: 19px; line-height: 28px; }
.social { display: flex; gap: 16px; margin-top: 24px; }
.social svg { width: 22px; height: 22px; fill: #a0aec0; }
.social .line { fill: none; stroke: #a0aec0; stroke-width: 1.800; }
```
